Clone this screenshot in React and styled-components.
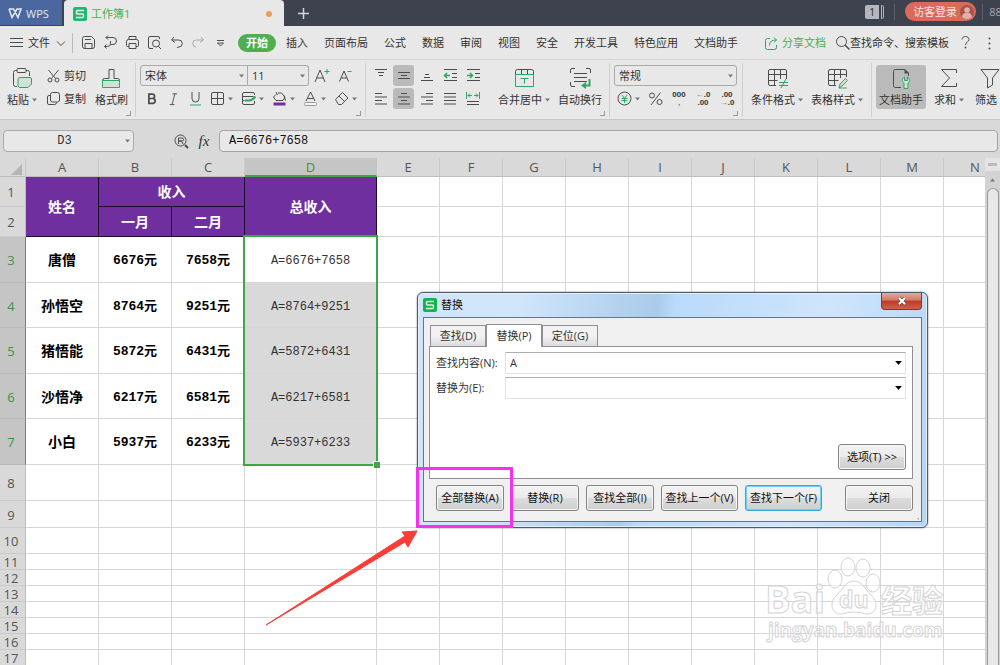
import React from "react";
import styled, { createGlobalStyle, css } from "styled-components";

const GREEN = "#2fa565";
const INK = "#4c4c4c";
const uiFont = `"Open Sans", "Noto Sans CJK SC", sans-serif`;
const cellFont = `"Liberation Mono", "Noto Sans CJK SC", monospace`;

const GlobalStyle = createGlobalStyle`
  * { box-sizing: border-box; }
  body {
    margin: 0;
    overflow: hidden;
    background: #fff;
    font: 11px/16px ${uiFont};
    color: #333;
  }
  button, input, select {
    margin: 0;
    padding: 0;
    border: 0;
    background: none;
    font: inherit;
    color: inherit;
    outline: none;
  }
  a { color: inherit; text-decoration: none; }
`;

/**
 * Icons
 */
const Svg = styled.svg`
  display: block;
  flex: none;
  fill: none;
  stroke: ${INK};
  .g { stroke: ${GREEN}; }
  .gf { stroke: ${GREEN}; fill: #cfe2d6; }
  .solid { stroke: none; fill: ${INK}; }
  .gsolid { stroke: none; fill: ${GREEN}; }
`;

const shapes = {
  save: <><path d="M1.5 3.5a2 2 0 0 1 2-2h7l3 3v7a2 2 0 0 1-2 2h-8a2 2 0 0 1-2-2z" /><path d="M4 4.5h6M4 13.5v-5h7v5" /></>,
  convert: <><path d="M3 2.5h7a3.5 3.5 0 0 1 0 7H7.5M5 .5l-2 2 2 2M1.5 11.5h3a3 3 0 0 0 3-3V6M3.5 9.5l-2 2 2 2" /></>,
  print: <><path d="M4 4.5v-3h7v3M4 11.5H2.5a1 1 0 0 1-1-1v-4a2 2 0 0 1 2-2h8a2 2 0 0 1 2 2v4a1 1 0 0 1-1 1H11M4 8.5h7v5H4z" /></>,
  preview: <><path d="M6 13.5H3A1.5 1.5 0 0 1 1.5 12V3A1.5 1.5 0 0 1 3 1.5h8A1.5 1.5 0 0 1 12.5 3v1M11.5 11.5L14 14" /><circle cx="9" cy="8.5" r="3.5" /></>,
  undo: <path d="M5 2L2.5 5 6 7.5M3 5h6.5a3.5 3.5 0 0 1 .5 7l-2 .5" />,
  redo: <path d="M10 2l2.5 3L9 7.5M12 5H5.5a3.5 3.5 0 0 0-.5 7" />,
  more: <><path d="M4 5.5h7" /><path d="M4.5 8h6l-3 3z" /></>,
  menu: <path d="M1 3.5h13M1 7.5h13M1 11.5h13" />,
  chevron: <path d="M3 5.5l4 4 4-4" />,
  share: <g className="g"><path d="M6 2.5H3.5a2 2 0 0 0-2 2v7a2 2 0 0 0 2 2h7a2 2 0 0 0 2-2V9M5.5 9.5c0-4 2-5.500 7-5.500M10 1.5L12.500 4 10 6.5" /></g>,
  search: <><circle cx="6.5" cy="6.5" r="5" /><path d="M10 10l4.500 4.500" strokeWidth="1.5" /></>,
  help: <><path d="M4 4.5c0-4 7-4 7 0 0 2.500-3.500 2.500-3.500 5.500" /><circle cx="7.5" cy="12.5" r=".9" className="solid" /></>,
  dots: <g className="solid"><circle cx="7.5" cy="2.500" r="1" /><circle cx="7.5" cy="7.5" r="1" /><circle cx="7.5" cy="12.500" r="1" /></g>,
  cut: <><circle cx="4" cy="12" r="2" /><circle cx="11" cy="12" r="2" /><path d="M5.5 10.5L12.500 2M9.5 10.5L2.500 2" /></>,
  copy: <path d="M4.5 3.5a2 2 0 0 1 2-2h5a2 2 0 0 1 2 2V9a2 2 0 0 1-2 2h-5a2 2 0 0 1-2-2zM4.500 4.5H3A1.5 1.5 0 0 0 1.5 6v6A1.5 1.5 0 0 0 3 13.5h5.500a2 2 0 0 0 2-2" />,
  paste: <><path d="M5 2.5H3.5a2 2 0 0 0-2 2v12a2 2 0 0 0 2 2H5M14 2.5h1.500a2 2 0 0 1 2 2V8" /><rect x="5" y=".5" width="9" height="4" rx="1" /><path className="gf" d="M8 9.5h10a1.500 1.500 0 0 1 1.500 1.500v5L16 19.500H8a2 2 0 0 1-2-2v-6a2 2 0 0 1 2-2z" /></>,
  brush: <><path d="M1.5 13v-.5a2 2 0 0 1 2-2H8v-9h5v9h3.500a2 2 0 0 1 2 2v.5" /><path className="gf" d="M1.500 12.500h17v7h-17z" /></>,
  fontUp: <><path d="M1 14L6 2l5 12M2.500 10h7" /><path className="g" d="M10.500 3.500h5M13 1v5" /></>,
  fontDown: <><path d="M1.500 13.500L6 3l4.500 10.500M3 10h6" /><path className="g" d="M9.500 3.500h4" /></>,
  bold: <path d="M4.500 2.500h4a2.500 2.500 0 0 1 0 5h-4zM4.500 7.500H9a2.500 2.500 0 0 1 0 5.500H4.500z" strokeWidth="2" />,
  italic: <path d="M7 2h5M4 13.500h5M9.500 2l-3 11.500" />,
  underline: <><path d="M4 1v6.500a3.500 3.500 0 0 0 7 0V1" /><path className="g" d="M2 14h11" /></>,
  borders: <path d="M1.500 3A1.500 1.500 0 0 1 3 1.500h9A1.500 1.500 0 0 1 13.500 3v9a1.500 1.500 0 0 1-1.500 1.500H3A1.500 1.500 0 0 1 1.500 12zM7.500 1.500v12M1.500 7.500h12" />,
  cellStyle: <><path d="M13.500 4V3A1.500 1.500 0 0 0 12 1.500H3A1.500 1.500 0 0 0 1.500 3v9A1.500 1.500 0 0 0 3 13.500h9a1.500 1.500 0 0 0 1.500-1.500v-2M1.500 5.500h11M1.500 9.500h2" /><path className="g" strokeWidth="2" d="M4 9.500h4c3 0 4-1 6.500-4" /></>,
  fill: <><path d="M4 3.500L1.500 6 4 9.500h7l2-3.500-3.500-4H6M4 1l1.500 3M12 4.500l1.500 5" /><path d="M1.500 13h12" stroke="#7030a0" strokeWidth="3" /></>,
  fontColor: <><path d="M3 10L7.500 1 12 10M4.500 7.500h6" /><rect x="1.500" y="11.500" width="12" height="3" rx="1" fill="#f4f4f4" stroke="#999" /></>,
  eraser: <path d="M1.500 8.500l7-7L14 7l-6.500 6.500h-3zM5 5l5.500 5.500" />,
  top: <path d="M2 1.500h12M5 4.500h6M6 7.500h4" />,
  middle: <path d="M2 4.500h12M5 7.500h6M2 10.500h12" />,
  bottom: <path d="M6 6.500h4M5 9.500h6M2 12.500h12" />,
  outdent: <><path d="M2 1.500h13M10 5.500h5M10 9.500h5M2 12.500h13" /><path className="g" strokeWidth="1.500" d="M8 7.500H2.500M5 5L2.500 7.500 5 10" /></>,
  indent: <><path d="M2 1.500h13M10 5.500h5M10 9.500h5M2 12.500h13" /><path className="g" strokeWidth="1.500" d="M2 7.500h5.500M5 5l2.500 2.500L5 10" /></>,
  left: <path d="M2 2.500h7M2 6h12M2 9.500h7M2 13h12" />,
  center: <path d="M5 2.500h6M2 6h12M5 9.500h6M2 13h12" />,
  right: <path d="M7 2.500h7M2 6h12M7 9.500h7M2 13h12" />,
  justify: <path d="M2 2.500h12M2 6h12M2 9.500h12M2 13h12" />,
  distribute: <><path d="M2 10.500h12M2 13.500h12" /><path className="g" d="M1.500 1v7M14.500 1v7M3 4.500h4M9 4.500h4M5 2.500l-2 2 2 2M11 2.500l2 2-2 2" /></>,
  merge: <><path d="M1.500 6.500v-3a2 2 0 0 1 2-2h14a2 2 0 0 1 2 2v3M7.500 1.500v5M13.500 1.500v5" /><path className="g" d="M1.500 6.500h18v12h-18zM6.500 10.500h8M10.500 10.500v5" /></>,
  wrap: <><path d="M.5 5V2A1.500 1.500 0 0 1 2 .5h3M16 .5h3A1.500 1.500 0 0 1 20.500 2v3M.5 14v3A1.500 1.500 0 0 0 2 18.500h3M4 5.500h13M4 9.500h13M4 13.500h13" /><path className="g" strokeWidth="2" d="M19.500 11v6.500H15" /><path className="gsolid" d="M11 17.500l5-3.500v7z" /></>,
  yen: <><circle cx="7.500" cy="7.500" r="6.500" /><path className="g" d="M5 4l2.500 3.500L10 4M4.500 7.500h6M4.500 9.500h6M7.500 7.500V12" /></>,
  percent: <><circle cx="4" cy="4.500" r="2.500" /><circle cx="11.500" cy="11" r="2.500" /><path d="M12.500 1.500L3 14" /></>,
  condition: <><path d="M9 17.500H3A1.500 1.500 0 0 1 1.500 16V3A1.500 1.500 0 0 1 3 1.500h15A1.500 1.500 0 0 1 19.500 3v8M1.500 6.500h18M1.500 12.500h9M7.500 1.500v16M13.500 1.500V11" /><path className="g" d="M12 14.500h9M12 17.500h9M19 11l-5 9" /></>,
  tableStyle: <><path d="M9 17.500H3A1.500 1.500 0 0 1 1.500 16V3A1.500 1.500 0 0 1 3 1.500h15A1.500 1.500 0 0 1 19.500 3v6M1.500 6.500h18M1.500 12.500h10M7.500 1.500v16M13.500 1.500V10" /><path className="gf" d="M12 20l1-4 5.500-5.500 2 2L15 18zM12 20h8" /></>,
  docHelp: <><path d="M10 19.500H4.500a2 2 0 0 1-2-2v-14a2 2 0 0 1 2-2H14l3.500 3.500v3" /><path className="solid" d="M13.500 1L18 5.500h-4.500z" /><path className="gf" d="M13.500 9c-3 2-2.500 5-.5 6v5.500h4V15c2-1 2.500-4-.5-6v3.500h-3z" /></>,
  sum: <path d="M17.500 5V1.500H2.500l8 8.500-8 8.500h15V15" />,
  filter: <path d="M1 1.500h18l-6.500 8.500v7l-5 3V10z" />,
  lookup: <><circle cx="6.500" cy="6.500" r="5.500" /><path d="M4.500 10V4H8a1.500 1.500 0 0 1 0 3H4.500h3L9 10" /><path d="M11 11l3 3" strokeWidth="2" /></>,
};

const Icon = ({ name, size = 15, view = size }) => (
  <Svg width={size} height={size} viewBox={`0 0 ${view} ${view}`} aria-hidden="true">
    {shapes[name]}
  </Svg>
);

const CaretSvg = styled.svg`
  display: block;
  flex: none;
  fill: ${props => props.$color || "#777"};
`;

const Caret = ({ color, width = 5 }) => (
  <CaretSvg $color={color} width={width} height="4" viewBox="0 0 5 3">
    <path d="M0 0h5L2.500 3z" />
  </CaretSvg>
);

const SheetLogo = ({ size, color }) => (
  <svg width={size} height={size} viewBox="0 0 14 14" aria-hidden="true">
    <rect width="14" height="14" rx="2" fill={color} />
    <path d="M11 3.500H4.500a1 1 0 0 0-1 1V6a1 1 0 0 0 1 1h5a1 1 0 0 1 1 1v1.500a1 1 0 0 1-1 1H3" fill="none" stroke="#eee" strokeWidth="1.500" />
  </svg>
);

/**
 * Title bar
 */
const TitleBar = styled.header`
  display: flex;
  height: 26px;
  overflow: hidden;
  background: #3e424f;
`;

const WpsTab = styled.button`
  display: flex;
  align-items: center;
  gap: 4px;
  width: 62px;
  height: 25px;
  padding: 2px 0 0 8px;
  background: #4a689f;
  color: #e6e9f0;
`;

const DocTab = styled.button`
  display: flex;
  align-items: center;
  gap: 4px;
  width: 220px;
  margin-left: 2px;
  padding: 2px 12px 0 9px;
  border-radius: 4px 4px 0 0;
  background: #e8e8e8;
  color: #4cae50;
`;

const Unsaved = styled.span`
  width: 6px;
  height: 6px;
  margin-left: auto;
  border-radius: 50%;
  background: #e9a056;
`;

const NewTab = styled.button`
  width: 38px;
  svg { margin: 0 auto; stroke: #d4d4d8; }
`;

// the build number runs off the right edge
const TitleRight = styled.div`
  display: flex;
  align-items: center;
  height: 23px;
  margin-right: -8px;
  margin-left: auto;
  color: #a4a7af;
`;

const Count = styled.span`
  width: 19px;
  height: 14px;
  margin-right: 10px;
  padding-right: 2px;
  border-right: 3px double #b5b7bd;
  border-radius: 2px;
  background: #b5b7bd content-box;
  color: #333;
  line-height: 14px;
  text-align: center;
`;

const Rule = styled.span`
  width: 1px;
  height: 16px;
  background: #5c606b;
`;

const Login = styled.button`
  display: flex;
  align-items: center;
  gap: 3px;
  height: 19px;
  margin: 0 6px 0 10px;
  padding: 0 2px 0 8px;
  border-radius: 10px;
  background: #db6a5b;
  color: #f6e6e3;
`;

const Build = styled.span`
  padding-left: 6px;
`;

/**
 * Menu bar
 */
const MenuBar = styled.nav`
  display: flex;
  align-items: center;
  height: 34px;
  padding: 0 4px 0 9px;
  border-bottom: 1px solid #d4d4d4;
  background: #e8e8e8;
  white-space: nowrap;
`;

const FileMenu = styled.button`
  display: flex;
  align-items: center;
  gap: 4px;
  height: 20px;
  padding-right: 4px;
  border-right: 1px solid #bbb;
`;

const QuickAccess = styled.div`
  display: flex;
  gap: 7px;
  padding: 0 10px 0 8px;
`;

const QuickButton = styled.button`
  opacity: ${props => (props.disabled ? 0.4 : 1)};
`;

const Tabs = styled.div`
  display: flex;
  gap: 16px;
`;

const MenuTab = styled.button`
  ${props =>
    props.$active &&
    css`
      height: 18px;
      margin-right: -6px;
      padding: 0 8px;
      border-radius: 9px;
      background: #4fae50;
      color: #fff;
      font-weight: bold;
    `}
`;

const MenuRight = styled.div`
  display: flex;
  align-items: center;
  gap: 9px;
  margin-left: auto;
`;

const MenuLink = styled.a`
  display: flex;
  align-items: center;
  gap: ${props => (props.$share ? 4 : 0)}px;
  color: ${props => (props.$share ? "#45b04b" : "#333")};
`;

/**
 * Ribbon
 */
const Ribbon = styled.div`
  display: flex;
  height: 60px;
  padding-top: 3px;
  overflow: hidden;
  border-bottom: 1px solid #c6c6c6;
  background: #e8e8e8;
  white-space: nowrap;
`;

const Group = styled.section`
  display: grid;
  grid-auto-flow: column;
  flex: none;
  align-content: start;
  column-gap: ${props => props.$gap || 0}px;
  height: 54px;
  padding: 2px ${props => props.$pad || 4}px 0;
  border-right: 1px solid #cfcfcf;
  background: ${props =>
    props.$launcher
      ? "linear-gradient(#999, #999) right 4px bottom 1px / 5px 1px no-repeat, linear-gradient(#999, #999) right 4px bottom 1px / 1px 5px no-repeat"
      : "none"};
`;

const BigButton = styled.button`
  display: flex;
  flex-direction: column;
  align-items: center;
  gap: 3px;
  height: 44px;
  padding: 3px 3px 0;
  border-radius: 3px;
  background: ${props => (props.$active ? "#bababa" : "none")};
`;

const Label = styled.span`
  display: flex;
  align-items: center;
  gap: 3px;
`;

const Stack = styled.div`
  display: grid;
  grid-template-rows: 21px 21px;
  row-gap: 2px;
  align-content: start;
  padding-right: ${props => props.$after || 0}px;
`;

const Tools = styled.div`
  display: flex;
  align-items: center;
  gap: ${props => props.$gap || 0}px;
`;

const Tool = styled.button`
  display: flex;
  align-items: center;
  justify-content: center;
  gap: 3px;
  min-width: ${props => props.$width || 0}px;
  height: 21px;
  border-radius: 3px;
  background: ${props => (props.$active ? "#bababa" : "none")};
`;

const Digits = styled.span`
  font: bold 8px/8px "Liberation Sans", sans-serif;
  white-space: pre;
  b { color: ${GREEN}; }
`;

const Combo = styled.span`
  display: grid;
  align-items: center;
  width: ${props => props.$width}px;
  height: 21px;
  border: 1px solid #a9a9a9;
  border-radius: ${props => props.$radius || "3px"};
  & + & { border-left: 0; }
  > * { grid-area: 1 / 1; }
  > svg { justify-self: end; margin-right: 3px; pointer-events: none; }
`;

const Select = styled.select`
  appearance: none;
  width: 100%;
  height: 19px;
  padding-left: 4px;
`;

/**
 * Formula row
 */
const FormulaRow = styled.div`
  display: flex;
  align-items: center;
  height: 38px;
  padding: 4px 2px 0 3px;
  background: #d9d9d9;
  font-family: ${cellFont};
  font-size: 12px;
`;

const NameBox = styled(Combo)`
  height: 22px;
  border-radius: 4px;
  background: #e8e8e8;
  input { width: 100%; padding-right: 8px; text-align: center; }
`;

const LookupButton = styled.button`
  margin-left: 40px;
`;

const Fx = styled.button`
  width: 30px;
  font: italic 15px/20px "Liberation Serif", serif;
`;

const FormulaInput = styled.input`
  flex: 1;
  min-width: 0;
  height: 22px;
  padding-left: 9px;
  border: 1px solid #a4a4a4;
  border-radius: 4px;
  background: #e8e8e8;
  color: #111;
`;

/**
 * Sheet
 */
const SheetArea = styled.main`
  display: flex;
  height: calc(100vh - 158px);
`;

const SheetView = styled.div`
  flex: 1;
  min-width: 0;
  overflow: hidden;
`;

const Table = styled.table`
  width: 100%;
  min-width: 1007px;
  table-layout: fixed;
  border-collapse: separate;
  border-spacing: 0;
`;

const Col = styled.col`
  width: ${props => props.$width}px;
`;

const Row = styled.tr`
  height: ${props => props.$height}px;
`;

const ColHead = styled.th`
  height: 19px;
  padding: 0;
  border-right: 1px solid ${props => (props.$selected ? "#c5c5c5" : "#cacaca")};
  border-bottom: ${props => (props.$selected ? "2px solid #3fa648" : "1px solid #bdbdbd")};
  background: ${props => (props.$selected ? "#c5c5c5" : "#d9d9d9")};
  color: ${props => (props.$selected ? "#3c9444" : "#555")};
  font-size: 13px;
  font-weight: normal;
  line-height: 16px;
  svg { display: block; margin: 4px 3px 0 auto; }
`;

const RowHead = styled.th`
  padding: 2px 3px 0 0;
  border-right: ${props => (props.$selected ? "1px solid #3fa648" : "1px solid #bdbdbd")};
  border-bottom: 1px solid ${props => (props.$selected ? "#b9b9b9" : "#c9c9c9")};
  background: ${props => (props.$selected ? "#c5c5c5" : "#d9d9d9")};
  color: ${props => (props.$selected ? "#3c9444" : "#555")};
  font-size: 13px;
  font-weight: normal;
  line-height: 13px;
`;

const Cell = styled.td`
  padding: 3px 0 0;
  border-right: 1px solid #d6d6d6;
  border-bottom: 1px solid #d6d6d6;
  background: ${props => (props.$filled ? "#d9d9d9" : "#fff")};
  font-family: ${cellFont};
  font-size: ${props => props.$size || 12}px;
  font-weight: ${props => (props.$bold ? "bold" : "normal")};
  color: ${props => (props.$bold ? "#000" : "#333")};
  text-align: center;
`;

const HeadCell = styled(Cell)`
  border-color: #1d0c2b;
  background: #702f9f;
  color: #fff;
  font-size: 14px;
  font-weight: bold;
  line-height: 18px;
`;

const ActiveCell = styled(Cell)`
  position: relative;
`;

// spans D3:D7, the height is the sum of those rows
const Selection = styled.span`
  position: absolute;
  z-index: 1;
  top: -2px;
  right: -2px;
  left: -2px;
  height: 231px;
  border: 2px solid #3fa648;
  &::after {
    content: "";
    position: absolute;
    right: -4px;
    bottom: -4px;
    width: 6px;
    height: 6px;
    border: 1px solid #fff;
    border-width: 1px 0 0 1px;
    background: #3fa648;
  }
`;

const Scrollbar = styled.div`
  display: flex;
  flex-direction: column;
  align-items: center;
  flex: none;
  width: 15px;
  background: #d3d3d3;
`;

const Splitter = styled.span`
  width: 15px;
  height: 13px;
  background: linear-gradient(#bbb, #bbb) center / 9px 3px no-repeat #e4e4e4;
`;

const ScrollUp = styled.button`
  width: 15px;
  height: 17px;
  svg { margin: 0 auto; transform: rotate(180deg); }
`;

const Thumb = styled.span`
  flex: 1;
  width: 12px;
  border: 1px solid #999;
  border-bottom: 0;
  border-radius: 6px 6px 0 0;
  background: #e8e8e8;
`;

/**
 * Replace dialog
 */
const Dialog = styled.section`
  position: absolute;
  z-index: 2;
  top: 292px;
  left: 417px;
  width: 511px;
  padding: 0 5px 5px;
  border: 1px solid #4d5b69;
  border-radius: 6px;
  background: linear-gradient(100deg, #cfe4fa 0, #d2e6fb 18%, #b5d3ef 36%, #aacbe9 44%, #b9dafa 47%, #cfe5fc 75%, #b4d5f7 100%);
  box-shadow: inset 0 0 0 1px #e4f1fd, 0 0 2px #777;
`;

const DialogTitle = styled.header`
  display: flex;
  justify-content: space-between;
  height: 24px;
`;

const Caption = styled.h1`
  display: flex;
  align-items: center;
  gap: 4px;
  margin: 0;
  color: #111;
  font: 11px/16px ${uiFont};
`;

const CloseX = styled.button`
  display: flex;
  align-items: center;
  justify-content: center;
  width: 41px;
  height: 17px;
  border: 1px solid #7c3a34;
  border-top: 0;
  border-radius: 0 0 4px 4px;
  background: linear-gradient(#e3aa9d, #d17a68 45%, #bd3b22 50%, #d0604a);
`;

const DialogBody = styled.div`
  padding: 6px 8px 10px 5px;
  border: 1px solid #68747f;
  background:
    radial-gradient(circle, #bbb 1px, transparent 1px) right 1px bottom 1px / 3px 3px no-repeat,
    #f0f0f0;
`;

const DialogTabs = styled.div`
  display: flex;
  align-items: flex-end;
  height: 22px;
  padding-left: 1px;
`;

const DialogTab = styled.button`
  width: 56px;
  height: ${props => (props.$active ? 23 : 21)}px;
  margin-bottom: ${props => (props.$active ? -1 : 0)}px;
  border: 1px solid #8e8f9b;
  border-bottom: 0;
  background: ${props => (props.$active ? "#fff" : "linear-gradient(#f2f2f2 50%, #dcdcdc)")};
`;

const Panel = styled.div`
  display: flex;
  flex-direction: column;
  height: 133px;
  padding: 5px 6px 8px;
  border: 1px solid #8e8f9b;
  background: #fff;
`;

const Field = styled.div`
  display: grid;
  grid-template-columns: 69px 1fr;
  align-items: center;
  height: 22px;
  margin-bottom: 3px;
`;

const FieldBox = styled.span`
  display: flex;
  height: 22px;
  padding: 0 3px 0 4px;
  border: 1px solid #e0e2e6;
  border-top-color: #abadb3;
  input { flex: 1; min-width: 0; }
`;

const DialogButton = styled.button`
  width: ${props => props.$width || 68}px;
  height: 26px;
  border: 1px solid ${props => (props.$default ? "#3aa5d6" : "#838383")};
  border-radius: 3px;
  background: linear-gradient(#f2f2f2, #ebebeb 48%, #dcdcdc 52%, #cfcfcf);
  box-shadow: inset 0 0 0 1px ${props => (props.$default ? "#6fd0f5" : "#f8f8f8")};
  color: #111;
  white-space: nowrap;
`;

const OptionsButton = styled(DialogButton)`
  align-self: flex-end;
  margin-top: auto;
`;

const DialogFooter = styled.footer`
  display: flex;
  gap: 7px;
  padding: 6px 0 0 7px;
  > :last-child { margin-left: auto; }
`;

/**
 * Annotations over the sheet
 */
const Highlight = styled.div`
  position: absolute;
  z-index: 3;
  top: 467px;
  left: 416px;
  width: 97px;
  height: 61px;
  border: 3px solid #f531f0;
`;

const Arrow = styled.svg`
  position: absolute;
  z-index: 3;
  top: 526px;
  left: 264px;
`;

const Watermark = styled.svg`
  position: absolute;
  z-index: 1;
  top: 552px;
  left: 762px;
  fill: #fff;
  fill-opacity: 0.5;
  stroke: #d4d4d4;
  font-family: "Open Sans", "Noto Sans CJK SC", sans-serif;
  font-weight: bold;
`;

/**
 * Data
 */
const quick = [
  ["save", "保存"],
  ["convert", "转换"],
  ["print", "打印"],
  ["preview", "预览"],
  ["undo", "撤销"],
  ["redo", "恢复"],
  ["more", "更多"],
];

const tabs = ["插入", "页面布局", "公式", "数据", "审阅", "视图", "安全", "开发工具", "特色应用", "文档助手"];

const columns = ["A", "B", "C", "D", "E", "F", "G", "H", "I", "J", "K", "L", "M", "N"];
const widths = [26, 73, 73, 73, 132].concat(Array(10).fill(63));

const people = [
  { name: "唐僧", a: 6676, b: 7658, height: 46 },
  { name: "孙悟空", a: 8764, b: 9251, height: 45 },
  { name: "猪悟能", a: 5872, b: 6431, height: 46 },
  { name: "沙悟净", a: 6217, b: 6581, height: 45 },
  { name: "小白", a: 5937, b: 6233, height: 46 },
];

const emptyRows = [36, 27, 26, 16, 16, 16, 16, 16, 16, 16];

const Blank = ({ count }) => Array.from({ length: count }, (_, i) => <Cell key={i} />);

/**
 * Components
 */
const Title = () => (
  <TitleBar>
    <WpsTab>
      <svg width="14" height="11" viewBox="0 0 14 11" fill="none" stroke="#e6e9f0" strokeWidth="1.500">
        <path d="M1 1l3 8.500L9 1h4l-3 8.500L5.500 1H1" />
      </svg>
      WPS
    </WpsTab>
    <DocTab>
      <SheetLogo size={14} color="#22b573" />
      工作簿1
      <Unsaved />
    </DocTab>
    <NewTab aria-label="新建">
      <svg width="11" height="11" viewBox="0 0 11 11" display="block"><path d="M5.500 0v11M0 5.500h11" strokeWidth="1.500" /></svg>
    </NewTab>
    <TitleRight>
      <Count>1</Count>
      <Rule />
      <Login>
        访客登录
        <svg width="14" height="14" viewBox="0 0 14 14">
          <circle cx="7" cy="7" r="7" fill="#a8524a" />
          <circle cx="7" cy="5" r="2.800" fill="#e0b0ab" />
          <path d="M2 12a5 4.500 0 0 1 10 0 7 7 0 0 1-10 0z" fill="#e0b0ab" />
        </svg>
      </Login>
      <Rule />
      <Build>881</Build>
    </TitleRight>
  </TitleBar>
);

const Menu = () => (
  <MenuBar>
    <FileMenu><Icon name="menu" />文件<Icon name="chevron" size={14} /></FileMenu>
    <QuickAccess>
      {quick.map(([name, label]) => (
        <QuickButton key={name} aria-label={label} disabled={name === "redo"}>
          <Icon name={name} />
        </QuickButton>
      ))}
    </QuickAccess>
    <Tabs>
      <MenuTab $active>开始</MenuTab>
      {tabs.map(tab => <MenuTab key={tab}>{tab}</MenuTab>)}
    </Tabs>
    <MenuRight>
      <MenuLink href="#share" $share><Icon name="share" size={14} />分享文档</MenuLink>
      <MenuLink href="#search"><Icon name="search" />查找命令、搜索模板</MenuLink>
      <QuickButton aria-label="帮助"><Icon name="help" /></QuickButton>
      <QuickButton aria-label="选项"><Icon name="dots" size={14} /></QuickButton>
    </MenuRight>
  </MenuBar>
);

const Big = ({ icon, children, caret, active }) => (
  <BigButton $active={active}>
    <Icon name={icon} size={21} />
    <Label>{children}{caret && <Caret />}</Label>
  </BigButton>
);

const RibbonBar = () => (
  <Ribbon>
    <Group $gap={6} $launcher>
      <Big icon="paste" caret>粘贴</Big>
      <Stack>
        <Tool><Icon name="cut" />剪切</Tool>
        <Tool><Icon name="copy" />复制</Tool>
      </Stack>
      <Big icon="brush">格式刷</Big>
    </Group>
    <Group $launcher>
      <Stack>
        <Tools>
          <Combo $width={108} $radius="3px 0 0 3px">
            <Select aria-label="字体"><option>宋体</option></Select>
            <Caret />
          </Combo>
          <Combo $width={61} $radius="0 3px 3px 0">
            <Select aria-label="字号"><option>11</option></Select>
            <Caret />
          </Combo>
          <Tool $width={26} aria-label="增大字号"><Icon name="fontUp" size={16} /></Tool>
          <Tool $width={20} aria-label="减小字号"><Icon name="fontDown" /></Tool>
        </Tools>
        <Tools>
          <Tool $width={22} aria-label="加粗"><Icon name="bold" size={13} view={15} /></Tool>
          <Tool $width={22} aria-label="倾斜"><Icon name="italic" size={14} view={15} /></Tool>
          <Tool $width={22} aria-label="下划线"><Icon name="underline" /></Tool>
          <Tool $width={31} aria-label="边框"><Icon name="borders" /><Caret /></Tool>
          <Tool $width={31} aria-label="单元格"><Icon name="cellStyle" /><Caret /></Tool>
          <Tool $width={31} aria-label="填充颜色"><Icon name="fill" /><Caret /></Tool>
          <Tool $width={31} aria-label="字体颜色"><Icon name="fontColor" /><Caret /></Tool>
          <Tool $width={31} aria-label="清除"><Icon name="eraser" /><Caret /></Tool>
        </Tools>
      </Stack>
    </Group>
    <Group $gap={2} $launcher>
      <Stack $after={10}>
        <Tools $gap={2}>
          {["top", "middle", "bottom", "outdent", "indent"].map(name => (
            <Tool key={name} $width={21} $active={name === "middle"} aria-label={name}>
              <Icon name={name} size={16} />
            </Tool>
          ))}
        </Tools>
        <Tools $gap={2}>
          {["left", "center", "right", "justify", "distribute"].map(name => (
            <Tool key={name} $width={21} $active={name === "center"} aria-label={name}>
              <Icon name={name} size={16} />
            </Tool>
          ))}
        </Tools>
      </Stack>
      <Big icon="merge" caret>合并居中</Big>
      <Big icon="wrap">自动换行</Big>
    </Group>
    <Group $launcher>
      <Stack>
        <Combo $width={123}>
          <Select aria-label="数字格式"><option>常规</option></Select>
          <Caret />
        </Combo>
        <Tools $gap={2}>
          <Tool $width={28} aria-label="货币"><Icon name="yen" /><Caret /></Tool>
          <Tool $width={22} aria-label="百分比"><Icon name="percent" /></Tool>
          <Tool $width={22}><Digits>000<br /><b>,</b></Digits></Tool>
          <Tool $width={22}><Digits><b>←</b>.0<br />.00</Digits></Tool>
          <Tool $width={22}><Digits>.00<br /><b>→</b>.0</Digits></Tool>
        </Tools>
      </Stack>
    </Group>
    <Group $gap={2} $pad={5}>
      <Big icon="condition" caret>条件格式</Big>
      <Big icon="tableStyle" caret>表格样式</Big>
    </Group>
    <Group $gap={5}>
      <Big icon="docHelp" active>文档助手</Big>
      <Big icon="sum" caret>求和</Big>
      <Big icon="filter" caret>筛选</Big>
    </Group>
  </Ribbon>
);

const Formula = () => (
  <FormulaRow>
    <NameBox $width={131}>
      <input aria-label="名称框" defaultValue="D3" />
      <Caret />
    </NameBox>
    <LookupButton aria-label="查找"><Icon name="lookup" /></LookupButton>
    <Fx>fx</Fx>
    <FormulaInput aria-label="编辑栏" defaultValue="A=6676+7658" />
  </FormulaRow>
);

const Sheet = () => (
  <Table>
    <colgroup>{widths.map((width, i) => <Col key={i} $width={width} />)}</colgroup>
    <thead>
      <tr>
        <ColHead>
          <svg width="11" height="11" viewBox="0 0 11 11"><path d="M11 0v11H0z" fill="#b5b5b5" /></svg>
        </ColHead>
        {columns.map(name => <ColHead key={name} $selected={name === "D"}>{name}</ColHead>)}
      </tr>
    </thead>
    <tbody>
      <Row $height={30}>
        <RowHead>1</RowHead>
        <HeadCell rowSpan={2}>姓名</HeadCell>
        <HeadCell colSpan={2}>收入</HeadCell>
        <HeadCell rowSpan={2}>总收入</HeadCell>
        <Blank count={10} />
      </Row>
      <Row $height={30}>
        <RowHead>2</RowHead>
        <HeadCell>一月</HeadCell>
        <HeadCell>二月</HeadCell>
        <Blank count={10} />
      </Row>
      {people.map(({ name, a, b, height }, i) => (
        <Row key={name} $height={height}>
          <RowHead $selected>{i + 3}</RowHead>
          <Cell $bold $size={14}>{name}</Cell>
          <Cell $bold $size={13}>{a}元</Cell>
          <Cell $bold $size={13}>{b}元</Cell>
          {i === 0 ? (
            <ActiveCell>A={a}+{b}<Selection /></ActiveCell>
          ) : (
            <Cell $filled>A={a}+{b}</Cell>
          )}
          <Blank count={10} />
        </Row>
      ))}
      {emptyRows.map((height, i) => (
        <Row key={i} $height={height}>
          <RowHead>{i + 8}</RowHead>
          <Blank count={14} />
        </Row>
      ))}
    </tbody>
  </Table>
);

const ReplaceDialog = () => (
  <Dialog role="dialog" aria-label="替换">
    <DialogTitle>
      <Caption><SheetLogo size={14} color="#12b347" />替换</Caption>
      <CloseX aria-label="关闭窗口">
        <svg width="10" height="8" viewBox="0 0 10 8"><path d="M2 1l6 6M8 1L2 7" stroke="#555" strokeWidth="3.500" /><path d="M2 1l6 6M8 1L2 7" stroke="#fff" strokeWidth="2" /></svg>
      </CloseX>
    </DialogTitle>
    <DialogBody>
      <DialogTabs>
        <DialogTab>查找(D)</DialogTab>
        <DialogTab $active>替换(P)</DialogTab>
        <DialogTab>定位(G)</DialogTab>
      </DialogTabs>
      <Panel>
        <Field>
          <label htmlFor="find">查找内容(N):</label>
          <FieldBox>
            <input id="find" defaultValue="A" />
            <button aria-label="查找记录"><Caret color="#000" width={7} /></button>
          </FieldBox>
        </Field>
        <Field>
          <label htmlFor="replace">替换为(E):</label>
          <FieldBox>
            <input id="replace" />
            <button aria-label="替换记录"><Caret color="#000" width={7} /></button>
          </FieldBox>
        </Field>
        <OptionsButton>选项(T) &gt;&gt;</OptionsButton>
      </Panel>
      <DialogFooter>
        <DialogButton>全部替换(A)</DialogButton>
        <DialogButton>替换(R)</DialogButton>
        <DialogButton>查找全部(I)</DialogButton>
        <DialogButton $width={77}>查找上一个(V)</DialogButton>
        <DialogButton $width={77} $default>查找下一个(F)</DialogButton>
        <DialogButton>关闭</DialogButton>
      </DialogFooter>
    </DialogBody>
  </Dialog>
);

const App = () => (
  <>
    <GlobalStyle />
    <Title />
    <Menu />
    <RibbonBar />
    <Formula />
    <SheetArea>
      <SheetView><Sheet /></SheetView>
      <Scrollbar>
        <Splitter />
        <ScrollUp aria-label="向上滚动"><Caret /></ScrollUp>
        <Thumb />
      </Scrollbar>
    </SheetArea>
    <Watermark width="190" height="96" viewBox="0 0 190 96">
      <text x="3" y="61" fontSize="38">Bai</text>
      <ellipse cx="73" cy="27" rx="7" ry="9" />
      <ellipse cx="86" cy="15" rx="7" ry="9" />
      <ellipse cx="101" cy="16" rx="7" ry="9" />
      <ellipse cx="111" cy="31" rx="7" ry="9" />
      <path d="M92 29c8 0 11 8 17 14 8 7 6 18-3 19-5 0-8-2-14-2s-10 2-14 2c-9-1-11-12-3-19 6-6 9-14 17-14z" />
      <text x="77" y="56" fontSize="23">du</text>
      <text x="119" y="60" fontSize="31">经验</text>
      <text x="6" y="85" fontSize="19">jingyan.baidu.com</text>
    </Watermark>
    <ReplaceDialog />
    <Highlight />
    <Arrow width="156" height="102" viewBox="0 0 156 102">
      <path d="M153 5L138 6l3 4L2 99l139-83 3 5z" fill="#fd3b37" stroke="#fd3b37" />
    </Arrow>
  </>
);

export default App;
